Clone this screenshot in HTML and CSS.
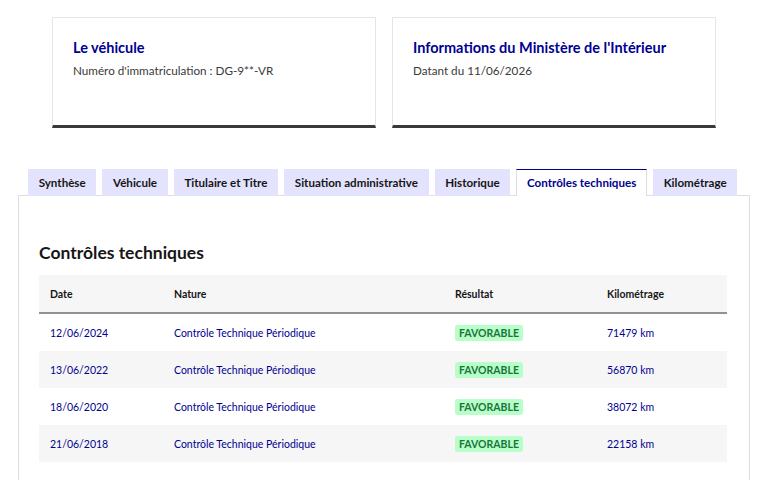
FILE: index.html
```html
<!DOCTYPE html>
<html>
<head>
    <title>Contrôles techniques</title>
    <meta name="viewport" content="width=device-width, initial-scale=1.0">
    <link rel="stylesheet" href="styles.css">
</head>
<body>
    <div class="cards">
        <div class="card">
            <h2 class="card-title">Le véhicule</h2>
            <p class="card-text">Numéro d'immatriculation : DG-9**-VR</p>
        </div>
        <div class="card">
            <h2 class="card-title">Informations du Ministère de l'Intérieur</h2>
            <p class="card-text">Datant du 11/06/2026</p>
        </div>
    </div>

    <div class="tabs">
        <ul class="tab-list">
            <li class="tab">Synthèse</li>
            <li class="tab">Véhicule</li>
            <li class="tab">Titulaire et Titre</li>
            <li class="tab">Situation administrative</li>
            <li class="tab">Historique</li>
            <li class="tab tab-active">Contrôles techniques</li>
            <li class="tab">Kilométrage</li>
        </ul>
        <div class="panel">
            <h3 class="panel-title">Contrôles techniques</h3>
            <table class="ct-table">
                <thead>
                    <tr>
                        <th class="col-date">Date</th>
                        <th class="col-nature">Nature</th>
                        <th class="col-result">Résultat</th>
                        <th>Kilométrage</th>
                    </tr>
                </thead>
                <tbody>
                    <tr>
                        <td>12/06/2024</td>
                        <td>Contrôle Technique Périodique</td>
                        <td><span class="badge">Favorable</span></td>
                        <td>71479 km</td>
                    </tr>
                    <tr>
                        <td>13/06/2022</td>
                        <td>Contrôle Technique Périodique</td>
                        <td><span class="badge">Favorable</span></td>
                        <td>56870 km</td>
                    </tr>
                    <tr>
                        <td>18/06/2020</td>
                        <td>Contrôle Technique Périodique</td>
                        <td><span class="badge">Favorable</span></td>
                        <td>38072 km</td>
                    </tr>
                    <tr>
                        <td>21/06/2018</td>
                        <td>Contrôle Technique Périodique</td>
                        <td><span class="badge">Favorable</span></td>
                        <td>22158 km</td>
                    </tr>
                </tbody>
            </table>
        </div>
    </div>
</body>
</html>
```

FILE: styles.css
```css
body {
    margin: 0;
    background-color: white;
    font-family: 'Lato', sans-serif;
    color: #161616;
    overflow: hidden;
}

/* Two information cards at the top */
.cards {
    display: flex;
    gap: 16px;
    padding: 17px 0 0 52px;
}

.card {
    width: 324px;
    height: 111px;
    border: 1px solid #e5e5e5;
    border-bottom: 3px solid #3a3a3a;
    padding: 0 20px;
    box-sizing: border-box;
}

.card-title {
    margin: 20px 0 0;
    font-size: 14.5px;
    font-weight: 700;
    color: #000091;
    line-height: 20px;
}

.card-text {
    margin: 3px 0 0;
    font-size: 11.7px;
    color: #3a3a3a;
    line-height: 18px;
}

.tabs {
    margin: 41px 0 0 18px;
    width: 732px;
}

.tab-list {
    list-style: none;
    margin: 0;
    padding: 0 0 0 10px;
    display: flex;
    gap: 6px;
}

.tab {
    background-color: #e3e3fd;
    font-size: 11.6px;
    font-weight: 700;
    color: #161616;
    white-space: nowrap;
    height: 26px;
    line-height: 26px;
    padding: 0 10.7px;
    border-top: 1px solid transparent;
}

.tab-active {
    background-color: white;
    color: #000091;
    padding: 0 9.7px;
    border-top: 1px solid #000091;
    border-left: 1px solid #ddd;
    border-right: 1px solid #ddd;
    position: relative;
    z-index: 1;
}

.panel {
    border: 1px solid #ddd;
    border-bottom: none;
    margin-top: -1px;
    padding: 44px 22px 20px 20px;
    height: 300px;
}

.panel-title {
    margin: 0 0 9px;
    font-size: 17.5px;
    font-weight: 700;
    line-height: 26px;
    color: #161616;
}

.ct-table {
    width: 100%;
    border-collapse: collapse;
    font-size: 10.5px;
}

.ct-table th {
    background-color: #f6f6f6;
    text-align: left;
    font-weight: 700;
    height: 37px;
    padding: 0 11px;
    border-bottom: 2px solid #929292;
    color: #161616;
}

.ct-table td {
    height: 37px;
    padding: 0 11px;
    color: #000091;
}

.ct-table tbody tr:nth-child(even) td {
    background-color: #f6f6f6;
}

.col-date {
    width: 102px;
}

.col-nature {
    width: 259px;
}

.col-result {
    width: 130px;
}

.badge {
    display: inline-block;
    background-color: #b8fec9;
    color: #18753c;
    font-weight: 700;
    text-transform: uppercase;
    border-radius: 3px;
    padding: 0 4px;
    line-height: 16px;
}
```
